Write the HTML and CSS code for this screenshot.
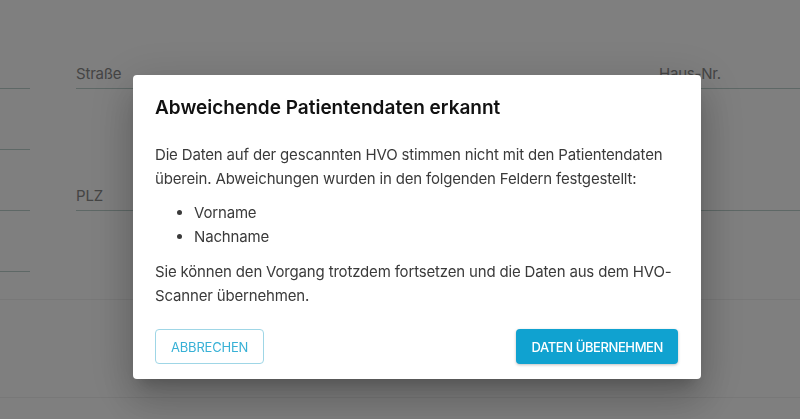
FILE: index.html
```html
<!DOCTYPE html>
<html lang="de">
<head>
    <meta charset="UTF-8">
    <meta name="viewport" content="width=device-width, initial-scale=1.0">
    <title>Patientendaten</title>
    <link rel="stylesheet" href="styles.css">
</head>
<body>
    <!-- Background form -->
    <div class="page">
        <div class="form-grid">
            <div class="field"><span class="field-label"></span></div>
            <div class="field"><span class="field-label">Straße</span></div>
            <div class="field"><span class="field-label">Haus-Nr.</span></div>

            <div class="field"><span class="field-label"></span></div>
            <div class="field field-empty"></div>
            <div class="field field-empty"></div>

            <div class="field"><span class="field-label"></span></div>
            <div class="field"><span class="field-label">PLZ</span></div>
            <div class="field"><span class="field-label"></span></div>

            <div class="field"><span class="field-label"></span></div>
            <div class="field field-empty"></div>
            <div class="field field-empty"></div>
        </div>
        <div class="section-line section-line-first"></div>
        <div class="section-gap"></div>
        <div class="section-line"></div>
    </div>

    <!-- Dialog -->
    <div class="backdrop">
        <div class="dialog">
            <h2 class="dialog-title">Abweichende Patientendaten erkannt</h2>
            <p class="dialog-text">Die Daten auf der gescannten HVO stimmen nicht mit den Patientendaten überein. Abweichungen wurden in den folgenden Feldern festgestellt:</p>
            <ul class="dialog-list">
                <li>Vorname</li>
                <li>Nachname</li>
            </ul>
            <p class="dialog-text">Sie können den Vorgang trotzdem fortsetzen und die Daten aus dem HVO-Scanner übernehmen.</p>
            <div class="dialog-actions">
                <button class="btn btn-outline">ABBRECHEN</button>
                <button class="btn btn-primary">DATEN ÜBERNEHMEN</button>
            </div>
        </div>
    </div>
</body>
</html>
```

FILE: styles.css
```css
body {
    font-family: Inter, "Noto Sans", Arial, sans-serif;
    background-color: #ffffff;
    margin: 0;
    color: #333;
    overflow: hidden;
}
.page {
    padding-top: 58px;
}
.form-grid {
    display: grid;
    grid-template-columns: 30px 537px 1fr;
    column-gap: 46px;
    grid-auto-rows: 31px;
    row-gap: 30px;
}
.field {
    border-bottom: 1px solid #bcd0cc;
    display: flex;
    align-items: flex-end;
    padding-bottom: 5px;
    box-sizing: border-box;
}
.field-empty {
    border-bottom: none;
}
.field-label {
    font-size: 15px;
    color: #8a8a8a;
    line-height: 18px;
    letter-spacing: -0.2px;
}
.section-line {
    height: 1px;
    background: #f0f0f0;
}
.section-line-first {
    margin-top: 27px;
}
.section-gap {
    height: 97px;
}
.backdrop {
    position: fixed;
    inset: 0;
    background: rgba(0, 0, 0, 0.5);
    display: flex;
    align-items: flex-start;
    padding: 75px 0 0 133px;
}
.dialog {
    width: 568px;
    box-sizing: border-box;
    background: white;
    border-radius: 4px;
    padding: 21px 23px 15px 22px;
    box-shadow: 0 11px 15px -7px rgba(0, 0, 0, 0.2), 0 24px 38px 3px rgba(0, 0, 0, 0.14), 0 9px 46px 8px rgba(0, 0, 0, 0.12);
}
.dialog-title {
    margin: 0 0 23px;
    font-size: 19px;
    font-weight: 600;
    line-height: 24px;
    color: #111;
}
.dialog-text {
    margin: 0;
    font-size: 15px;
    line-height: 24px;
    letter-spacing: -0.17px;
    color: #3a3a3a;
}
.dialog-list {
    margin: 10px 0 11px;
    padding-left: 39px;
    font-size: 15px;
    line-height: 24px;
    letter-spacing: -0.17px;
    color: #3a3a3a;
}
.dialog-actions {
    display: flex;
    justify-content: space-between;
    margin-top: 21px;
}
.btn {
    font-family: inherit;
    font-size: 13px;
    height: 35px;
    padding: 0 15px;
    border-radius: 4px;
    cursor: pointer;
    letter-spacing: -0.2px;
}
.btn-outline {
    background: white;
    color: #38b1d6;
    border: 1px solid #9fd6e6;
}
.btn-primary {
    background: #10a2d0;
    color: white;
    border: none;
    font-weight: 500;
    letter-spacing: -0.4px;
    box-shadow: 0 1px 3px rgba(0, 0, 0, 0.25);
}
```
